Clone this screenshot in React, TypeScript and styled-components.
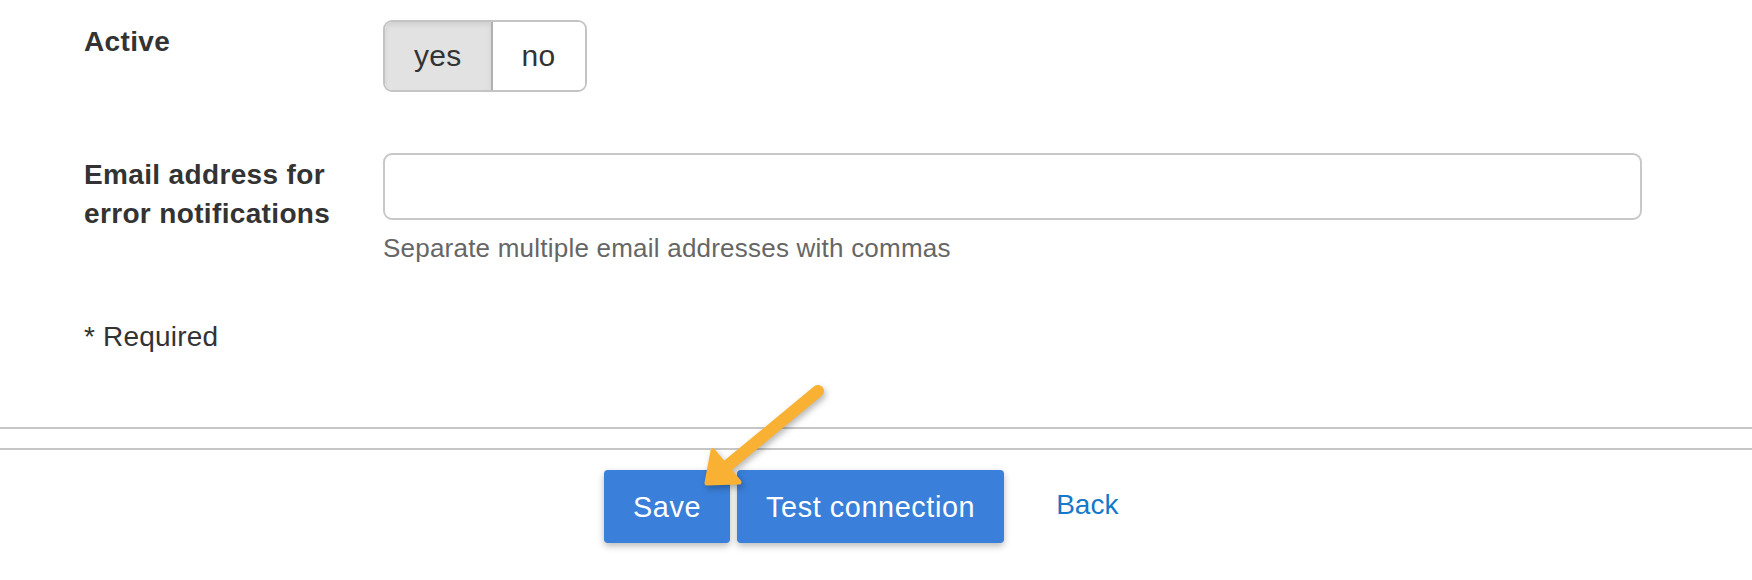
import React from "react";
import styled, { createGlobalStyle } from "styled-components";

const GlobalStyle = createGlobalStyle`
  html, body {
    margin: 0;
    padding: 0;
    background: #ffffff;
  }
  body {
    font-family: "Liberation Sans", Arial, Helvetica, sans-serif;
    color: #333333;
    -webkit-font-smoothing: antialiased;
  }
  * { box-sizing: border-box; }
`;

const Page = styled.div`
  position: relative;
  width: 1752px;
  height: 580px;
  overflow: hidden;
`;

const Form = styled.div`
  padding: 20px 110px 0 84px;
  display: flex;
  flex-direction: column;
`;

const FieldRow = styled.div<{ $top?: number }>`
  display: grid;
  grid-template-columns: 299px 1fr;
  align-items: start;
  margin-top: ${(p) => p.$top ?? 0}px;
`;

const Label = styled.div`
  font-size: 28px;
  line-height: 39px;
  font-weight: 700;
  letter-spacing: 0.35px;
  color: #333333;
  padding-top: 2px;
`;

const Field = styled.div`
  display: flex;
  flex-direction: column;
  align-items: flex-start;
`;

const Toggle = styled.div`
  display: inline-flex;
  height: 72px;
  border: 2px solid #c4c4c4;
  border-radius: 9px;
  overflow: hidden;
`;

const ToggleOption = styled.button<{ $active?: boolean }>`
  font-family: inherit;
  font-size: 30px;
  letter-spacing: 0.3px;
  line-height: 68px;
  height: 68px;
  padding: 0 29px;
  margin: 0;
  border: none;
  color: #333333;
  cursor: pointer;
  background: ${(p) => (p.$active ? "#e2e2e2" : "#ffffff")};
  box-shadow: ${(p) => (p.$active ? "inset 0 3px 5px rgba(0,0,0,0.08)" : "none")};
  & + & {
    border-left: 2px solid #b0b0b0;
  }
`;

const TextInput = styled.input`
  width: 100%;
  height: 67px;
  border: 2px solid #c8c8c8;
  border-radius: 9px;
  font-family: inherit;
  font-size: 28px;
  padding: 0 16px;
  outline: none;
  background: #fff;
`;

const Help = styled.div`
  margin-top: 10px;
  font-size: 26px;
  letter-spacing: 0.22px;
  line-height: 36px;
  color: #666666;
`;

const RequiredNote = styled.div`
  margin-top: 51px;
  font-size: 28px;
  line-height: 39px;
  letter-spacing: 0.2px;
  color: #333333;
`;

const Rules = styled.div`
  margin-top: 71px;
  height: 23px;
  border-top: 2px solid #c6c6c6;
  border-bottom: 2px solid #c6c6c6;
`;

const Footer = styled.div`
  display: flex;
  align-items: center;
  padding: 20px 0 0 604px;
`;

const PrimaryButton = styled.button`
  font-family: inherit;
  font-size: 28.8px;
  letter-spacing: 0.6px;
  line-height: 40px;
  height: 73px;
  padding: 0 29px;
  margin: 0 7px 0 0;
  border: none;
  border-radius: 4px;
  background: #3a7fd9;
  color: #ffffff;
  cursor: pointer;
  box-shadow: 0 3px 7px rgba(0, 0, 0, 0.28);
`;

const BackLink = styled.a`
  margin-left: 45px;
  margin-top: -4px;
  font-size: 28px;
  line-height: 40px;
  color: #1479c9;
  text-decoration: none;
  cursor: pointer;
`;

const ArrowOverlay = styled.svg`
  position: absolute;
  left: 690px;
  top: 370px;
  width: 150px;
  height: 130px;
  overflow: visible;
  pointer-events: none;
  filter: drop-shadow(2px 3px 3px rgba(0, 0, 0, 0.28));
`;

function Arrow() {
  return (
    <ArrowOverlay viewBox="0 0 150 130">
      <line
        x1={128}
        y1={21}
        x2={36}
        y2={97}
        stroke="#f8b133"
        strokeWidth={12}
        strokeLinecap="round"
      />
      <polygon
        points="17,113 49,112 23,81"
        fill="#f8b133"
        stroke="#f8b133"
        strokeWidth={5}
        strokeLinejoin="round"
      />
    </ArrowOverlay>
  );
}

export default function App() {
  return (
    <>
      <GlobalStyle />
      <Page>
        <Form>
          <FieldRow>
            <Label>Active</Label>
            <Field>
              <Toggle>
                <ToggleOption $active>yes</ToggleOption>
                <ToggleOption>no</ToggleOption>
              </Toggle>
            </Field>
          </FieldRow>
          <FieldRow $top={61}>
            <Label>
              Email address for
              <br />
              error notifications
            </Label>
            <Field>
              <TextInput type="text" />
              <Help>Separate multiple email addresses with commas</Help>
            </Field>
          </FieldRow>
          <RequiredNote>* Required</RequiredNote>
        </Form>
        <Rules />
        <Footer>
          <PrimaryButton>Save</PrimaryButton>
          <PrimaryButton>Test connection</PrimaryButton>
          <BackLink>Back</BackLink>
        </Footer>
        <Arrow />
      </Page>
    </>
  );
}
